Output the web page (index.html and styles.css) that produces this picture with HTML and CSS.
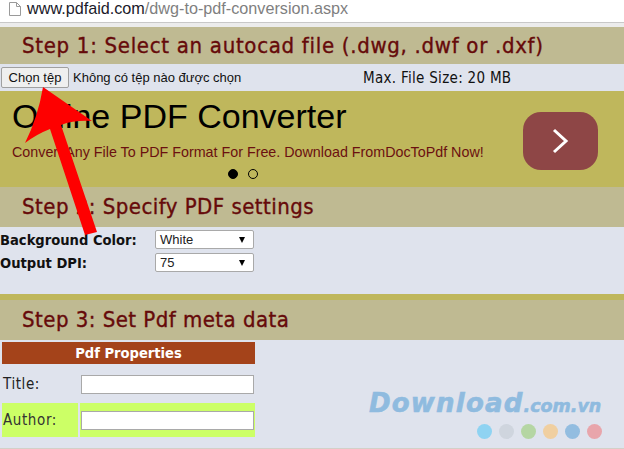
FILE: index.html
```html
<!DOCTYPE html>
<html lang="en">
<head>
    <meta charset="UTF-8">
    <title>PDF Aid</title>
    <link rel="stylesheet" href="styles.css">
</head>
<body>
    <div class="address-bar">
        <svg class="page-icon" width="12" height="14" viewBox="0 0 12 14">
            <path d="M.5 .5h7l4 4v9h-11z M7.500 .5v4h4" fill="#fff" stroke="#9a9a9a"/>
        </svg>
        <span class="url">www.pdfaid.com<span class="url-path">/dwg-to-pdf-conversion.aspx</span></span>
    </div>
    <div class="chrome-gap"></div>

    <h2 class="step step-first">Step 1: Select an autocad file (.dwg, .dwf or .dxf)</h2>
    <div class="file-row">
        <button class="file-button">Chọn tệp</button>
        <span class="file-status">Không có tệp nào được chọn</span>
        <span class="file-max">Max. File Size: 20 MB</span>
    </div>

    <div class="banner">
        <div class="banner-text">
            <div class="banner-title">Online PDF Converter</div>
            <div class="banner-sub">Convert Any File To PDF Format For Free. Download FromDocToPdf Now!</div>
            <div class="banner-dots">
                <span class="dot dot-on"></span>
                <span class="dot"></span>
            </div>
        </div>
        <div class="banner-next">
            <svg width="20" height="26" viewBox="0 0 20 26">
                <path d="M3 2l12 11-12 11" fill="none" stroke="#fff" stroke-width="3"/>
            </svg>
        </div>
    </div>

    <h2 class="step">Step 2: Specify PDF settings</h2>
    <div class="settings">
        <div class="setting-row">
            <label>Background Color:</label>
            <div class="select-box">White</div>
        </div>
        <div class="setting-row">
            <label>Output DPI:</label>
            <div class="select-box">75</div>
        </div>
    </div>
    <div class="strip"></div>

    <h2 class="step">Step 3: Set Pdf meta data</h2>
    <div class="meta">
        <div class="meta-head">Pdf Properties</div>
        <div class="meta-row">
            <div class="meta-label">Title:</div>
            <div class="meta-field"><input type="text"></div>
        </div>
        <div class="meta-row meta-row-alt">
            <div class="meta-label">Author:</div>
            <div class="meta-field"><input type="text"></div>
        </div>
    </div>

    <!-- red arrow drawn over the page -->
    <svg class="arrow" width="100" height="150" viewBox="0 0 100 150">
        <path d="M43 0L92 34Q74 33 61 38L97 145L85 148L50 42Q37 47 25 56Q38 30 43 0z" fill="#fe0000"/>
    </svg>

    <div class="watermark">
        <div class="wm-text">Download<span class="wm-tld">.com.vn</span></div>
        <div class="wm-dots">
            <span style="background: #8fd3f2"></span>
            <span style="background: #cfd5de"></span>
            <span style="background: #b5d6a3"></span>
            <span style="background: #f0cfa0"></span>
            <span style="background: #93bde0"></span>
            <span style="background: #e8a5ab"></span>
        </div>
    </div>
</body>
</html>
```

FILE: styles.css
```css
html, body {
    margin: 0;
    padding: 0;
}

body {
    position: relative;
    width: 624px;
    height: 449px;
    overflow: hidden;
    background-color: #dfe3ed;
    border-bottom: 1px solid #d3d0c8;
    box-sizing: border-box;
    font-family: "DejaVu Sans Condensed", "DejaVu Sans", sans-serif;
}

.address-bar {
    display: flex;
    align-items: center;
    height: 22px;
    padding-left: 9px;
    background-color: #fff;
    border-bottom: 1px solid #c8c8c8;
}

.page-icon {
    margin-right: 6px;
    margin-top: -5px;
}

.url {
    font-family: "Liberation Sans", sans-serif;
    font-size: 16.2px;
    color: #1a1a2a;
    margin-top: -5px;
}

.url-path {
    color: #7f7f7f;
}

.chrome-gap {
    height: 4px;
    background-color: #ececec;
}

.step {
    margin: 0;
    height: 40px;
    line-height: 40px;
    padding-left: 22px;
    background-color: #bfba92;
    color: #660a0a;
    font-size: 22px;
    font-weight: 400;
    letter-spacing: 0.47px;
    -webkit-text-stroke: 0.35px #660a0a;
    white-space: nowrap;
}

.step-first {
    height: 37px;
    line-height: 37px;
    letter-spacing: 0.7px;
}

.file-row {
    display: flex;
    align-items: center;
    height: 27px;
    color: #111;
}

.file-button {
    width: 68px;
    height: 21px;
    margin: 0 4px 0 1px;
    padding: 0;
    background-color: #efefef;
    border: 1px solid #a0a0a0;
    border-radius: 2px;
    font-family: "Liberation Sans", sans-serif;
    font-size: 13px;
    color: #111;
}

.file-status {
    width: 290px;
    font-family: "Liberation Sans", sans-serif;
    font-size: 13px;
}

.file-max {
    font-size: 15px;
    letter-spacing: 0.3px;
}

.banner {
    display: flex;
    justify-content: space-between;
    height: 96px;
    background-color: #bfb75c;
}

.banner-text {
    flex: 1;
    padding-left: 12px;
    font-family: "Liberation Sans", sans-serif;
}

.banner-title {
    margin-top: 5px;
    font-size: 34px;
    line-height: 40px;
    color: #000;
}

.banner-sub {
    margin-top: 7px;
    font-size: 14.3px;
    line-height: 18px;
    color: #6b1010;
}

.banner-dots {
    display: flex;
    gap: 10px;
    margin: 8px 0 0 216px;
}

.dot {
    width: 8px;
    height: 8px;
    border: 1px solid #000;
    border-radius: 50%;
}

.dot-on {
    background-color: #000;
}

.banner-next {
    display: flex;
    align-items: center;
    justify-content: center;
    width: 75px;
    height: 58px;
    margin: 21px 26px 0 0;
    background-color: #8e4646;
    border-radius: 18px;
}

.settings {
    height: 67px;
    padding-top: 3px;
    box-sizing: border-box;
}

.setting-row {
    display: flex;
    align-items: center;
    height: 19px;
    margin-bottom: 4px;
}

.setting-row label {
    width: 155px;
    font-size: 14.6px;
    font-weight: 700;
    color: #111;
    white-space: nowrap;
}

.select-box {
    position: relative;
    width: 99px;
    height: 19px;
    padding-left: 4px;
    background-color: #fff;
    border: 1px solid #a9a9a9;
    border-radius: 2px;
    box-sizing: border-box;
    font-family: "Liberation Sans", sans-serif;
    font-size: 13px;
    line-height: 17px;
    color: #222;
}

.select-box::after {
    content: "";
    position: absolute;
    right: 8px;
    top: 6px;
    border-left: 3.500px solid transparent;
    border-right: 3.500px solid transparent;
    border-top: 6px solid #000;
}

.strip {
    height: 6px;
    background-color: #bfb75c;
}

.meta {
    width: 253px;
    margin-left: 2px;
    padding-top: 2px;
}

.meta-head {
    height: 22px;
    line-height: 21px;
    background-color: #a4431a;
    color: #fff;
    font-size: 14.6px;
    font-weight: 700;
    text-align: center;
}

.meta-row {
    display: flex;
    gap: 2px;
    height: 34px;
    margin-top: 3px;
    font-size: 15px;
    letter-spacing: 0.6px;
    color: #222;
}

.meta-row-alt {
    margin-top: 2px;
    color: #333;
}

.meta-row-alt .meta-label,
.meta-row-alt .meta-field {
    background-color: #ccff66;
}

.meta-label {
    display: flex;
    align-items: center;
    width: 76px;
    padding-left: 1px;
    box-sizing: border-box;
}

.meta-field {
    display: flex;
    align-items: center;
    flex: 1;
    padding-left: 1px;
}

.meta-field input {
    width: 173px;
    height: 19px;
    padding: 0;
    background-color: #fff;
    border: 1px solid #a9a9a9;
    box-sizing: border-box;
}

.arrow {
    position: absolute;
    left: 0;
    top: 87px;
}

.watermark {
    position: absolute;
    left: 369px;
    top: 390px;
    width: 233px;
}

.wm-text {
    font-family: "DejaVu Sans", sans-serif;
    font-size: 26px;
    font-style: italic;
    font-weight: 700;
    line-height: 26px;
    color: #8fbbdf;
    -webkit-text-stroke: 0.6px #8fbbdf;
    white-space: nowrap;
    letter-spacing: 1.2px;
}

.wm-tld {
    font-size: 17.5px;
    letter-spacing: 0;
}

.wm-dots {
    display: flex;
    justify-content: flex-end;
    gap: 7px;
    margin-top: 5px;
}

.wm-dots span {
    width: 15px;
    height: 15px;
    border-radius: 50%;
}
```
